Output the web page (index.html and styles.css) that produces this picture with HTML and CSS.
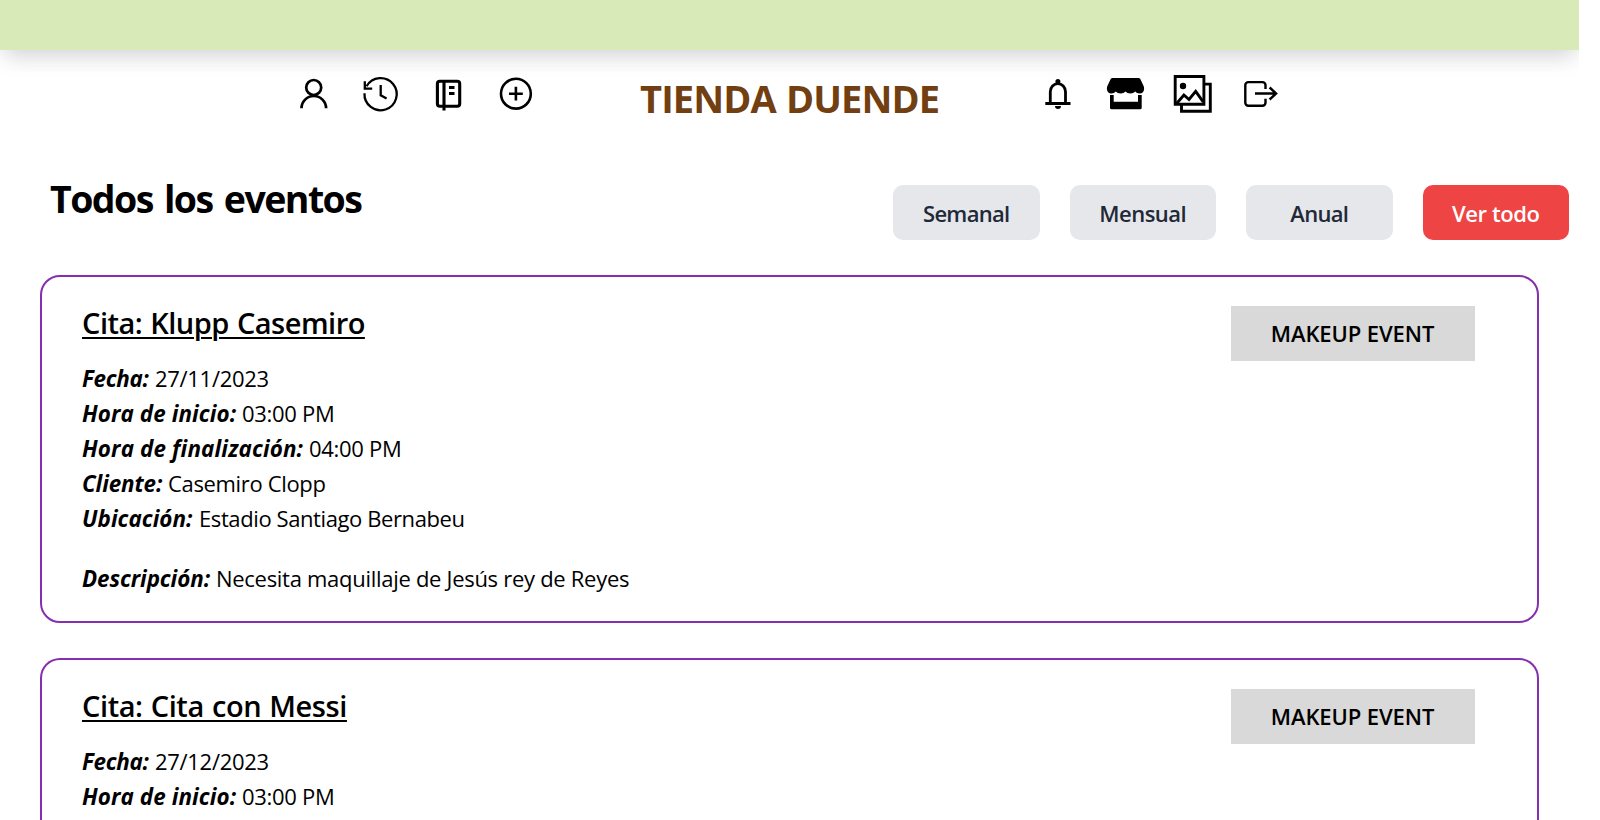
FILE: index.html
```html
<!DOCTYPE html>
<html lang="es">
<head>
<meta charset="utf-8">
<title>Tienda Duende</title>
<link rel="stylesheet" href="styles.css">
</head>
<body>
<header class="banner"></header>
<nav class="nav">
  <div class="icons icons-left">
    <svg class="icon" viewBox="0 0 40 44" stroke-width="2.7"><circle cx="19.7" cy="17.5" r="7.5"/><path d="M7.5 38.3a12.3 12.3 0 0 1 24.6 0"/></svg>
    <svg class="icon" viewBox="0 0 40 44" stroke-width="2.3"><path d="M3.5 23.3A16.1 16.1 0 1 0 5.6 16.2M3.8 11.3v7.4h7.4"/><path d="M19.7 15v10.3l5.9 3.3"/></svg>
    <svg class="icon" viewBox="0 0 40 44" stroke-width="3.1"><rect x="9.400" y="11.3" width="22.3" height="24.9" rx="2.5"/><path d="M16 11v29.500M21 17.500h5.500M21 23.500h5.500"/></svg>
    <svg class="icon" viewBox="0 0 40 44" stroke-width="2.6"><circle cx="19.9" cy="23.7" r="14.9"/><path d="M19.9 16.8v13.8M13 23.7h13.8"/></svg>
  </div>
  <h1 class="brand">TIENDA DUENDE</h1>
  <div class="icons icons-right">
    <svg class="icon" viewBox="0 0 40 44" stroke-width="2.8"><path d="M12.3 34V21.8a7.6 8.2 0 0 1 15.2 0V34M7.3 33.5h25.2"/><circle class="solid" cx="19.9" cy="11.6" r="2.5"/><path class="solid" d="M17 36h6a3 3 0 0 1-6 0z"/></svg>
    <svg class="icon" viewBox="0 0 40 44"><path class="solid" d="M6.500 8h26q1.200 0 1.800 1l3.300 7c1.500 4-.5 7.500-4 7.500-2 0-3.300-.8-4.400-2-1.200 1.200-2.700 2-4.800 2s-3.700-.8-4.900-2c-1.200 1.200-2.800 2-4.900 2s-3.600-.8-4.800-2c-1.100 1.200-2.400 2-4.400 2-3.500 0-5.500-3.500-4-7.500l3.300-7q.6-1 1.800-1zM4 25h3.700v6.700h24.300V25h3.700v12.800q0 1.500-1.500 1.500H5.500q-1.500 0-1.500-1.500z"/></svg>
    <svg class="icon" viewBox="0 0 40 44" stroke-width="2.9"><path d="M2.200 6.500h28.700v27.700H2.200zM31.700 14.100h5.600v27.200H8.500V35"/><path d="M3.200 34l7.700-9 5.100 4.500 6.700-8.200 7.500 10.500"/><circle class="solid" cx="10" cy="16" r="3.200"/></svg>
    <svg class="icon" viewBox="0 0 40 44" stroke-width="2.400"><path d="M24.500 19v-3.900a3 3 0 0 0-3-3H7.300a3 3 0 0 0-3 3v17.600a3 3 0 0 0 3 3h14.200a3 3 0 0 0 3-3v-3.900"/><path d="M14 23.500h21.300M28.600 17.500l6.500 6-6.500 6"/></svg>
  </div>
</nav>
<main>
  <div class="toolbar">
    <h2 class="heading">Todos los eventos</h2>
    <div class="filters">
      <button class="filter semanal">Semanal</button>
      <button class="filter mensual">Mensual</button>
      <button class="filter anual">Anual</button>
      <button class="filter active">Ver todo</button>
    </div>
  </div>
  <section class="card">
    <div class="details">
      <h3 class="title">Cita: Klupp Casemiro</h3>
      <p><b class="fecha">Fecha:</b><span class="num">27/11/2023</span></p>
      <p><b class="inicio">Hora de inicio:</b><span class="num">03:00 PM</span></p>
      <p><b class="fin">Hora de finalización:</b><span class="num">04:00 PM</span></p>
      <p><b class="cliente">Cliente:</b><span class="name">Casemiro Clopp</span></p>
      <p><b class="lugar">Ubicación:</b><span class="place">Estadio Santiago Bernabeu</span></p>
      <p class="description"><b class="desc">Descripción:</b><span class="text">Necesita maquillaje de Jesús rey de Reyes</span></p>
    </div>
    <div class="tag">MAKEUP EVENT</div>
  </section>
  <section class="card">
    <div class="details">
      <h3 class="title title-messi">Cita: Cita con Messi</h3>
      <p><b class="fecha">Fecha:</b><span class="num">27/12/2023</span></p>
      <p><b class="inicio">Hora de inicio:</b><span class="num">03:00 PM</span></p>
    </div>
    <div class="tag">MAKEUP EVENT</div>
  </section>
</main>
</body>
</html>
```
FILE: styles.css
```css
* { box-sizing: border-box; margin: 0; padding: 0; }
html { height: 100%; overflow: hidden; }
body {
  width: 1579px;
  background: #fff;
  color: #000;
  font-family: "Open Sans", "Noto Sans", sans-serif;
  font-size: 22px;
}
main { height: 670px; overflow: hidden; }
.banner {
  height: 50px;
  background: #d9eab9;
  box-shadow: 0 12.5px 22px -3.75px rgba(0,0,0,.1), 0 5px 24px -4px rgba(0,0,0,.09);
}
.nav { display: flex; height: 100px; padding: 20px 0 0 294px; }
.icons { display: flex; height: 44px; }
.icon {
  flex: none;
  width: 40px;
  height: 44px;
  fill: none;
  stroke: #000;
}
.solid { fill: #000; stroke: none; }
.icons-left { width: 346px; gap: 27.2px; }
.icons-right { gap: 27.7px; }
.brand {
  width: 398px;
  height: 56px;
  color: #713f12;
  font-size: 38px;
  font-weight: 700;
  line-height: 56px;
  letter-spacing: -.87px;
  word-spacing: 1px;
  white-space: nowrap;
}
.toolbar {
  display: flex;
  justify-content: space-between;
  height: 125px;
  padding: 35px 10px 0 50px;
}
.heading {
  height: 28px;
  font-size: 37.5px;
  font-weight: 700;
  line-height: 27px;
  letter-spacing: -1.55px;
  word-spacing: 3px;
  white-space: nowrap;
}
.filters { display: flex; gap: 30px; }
.filter {
  width: 146.5px;
  height: 55px;
  padding-top: 1px;
  border: 0;
  border-radius: 10px;
  background: #e5e7eb;
  color: #1f2937;
  font: 600 22px "Open Sans", "Noto Sans", sans-serif;
}
.semanal { letter-spacing: -.7px; }
.mensual { letter-spacing: -.5px; }
.anual { letter-spacing: -.7px; }
.active { background: #ef4444; color: #fff; letter-spacing: -.4px; }
.card {
  display: flex;
  justify-content: space-between;
  align-items: flex-start;
  width: 1499px;
  height: 348px;
  margin: 0 0 35px 40px;
  padding: 29px 62px 25px 40px;
  border: 2px solid #862eae;
  border-radius: 20px;
}
.card:last-child { height: 162px; margin-bottom: 0; padding-bottom: 0; border-bottom: 0; border-radius: 20px 20px 0 0; }
.title {
  height: 33px;
  margin-bottom: 22px;
  font-size: 29px;
  font-weight: 600;
  line-height: 33px;
  letter-spacing: -.5px;
  word-spacing: 1px;
  text-decoration: underline;
  text-decoration-thickness: 2px;
  text-underline-offset: 3px;
}
.title-messi { letter-spacing: -.42px; }
.details p { height: 35px; line-height: 35px; white-space: nowrap; }
.details .description { margin-top: 25px; }
.details b { display: inline-block; font-size: 22.4px; font-style: italic; font-weight: 700; }
.fecha { width: 73px; letter-spacing: -.3px; }
.inicio { width: 160px; letter-spacing: .1px; }
.fin { width: 227px; letter-spacing: .15px; }
.cliente { width: 86px; letter-spacing: -.1px; }
.lugar { width: 117px; letter-spacing: .05px; }
.desc { width: 134px; letter-spacing: -.08px; }
.num { letter-spacing: -.3px; }
.name { letter-spacing: -.34px; }
.place { letter-spacing: -.4px; }
.text { letter-spacing: -.29px; }
.tag {
  width: 244px;
  height: 55px;
  padding-right: 1px;
  background: #d9d9d9;
  font-weight: 600;
  line-height: 55px;
  letter-spacing: -.1px;
  text-align: center;
}
```
